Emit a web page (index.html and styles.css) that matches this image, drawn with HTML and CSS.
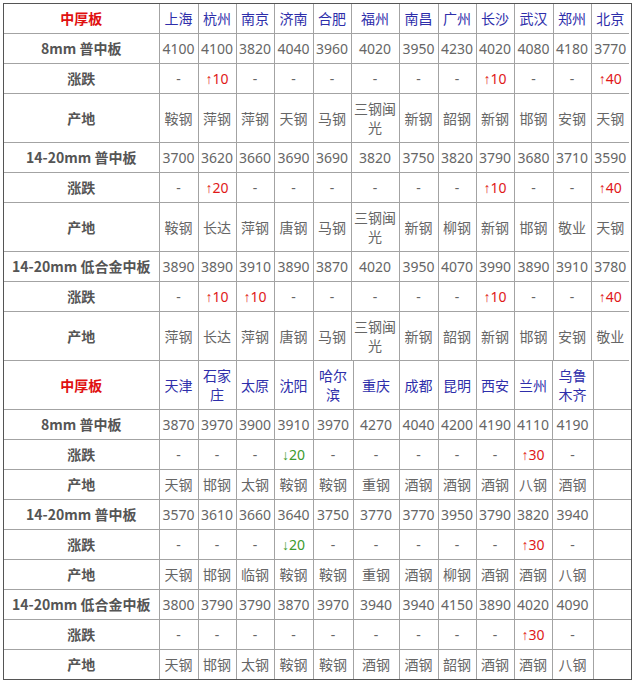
FILE: index.html
```html
<!DOCTYPE html>
<html lang="zh">
<head>
<meta charset="utf-8">
<title>中厚板价格</title>
<link rel="stylesheet" href="styles.css">
</head>
<body>
<div class="wrap">
<table class="grid t1">
<colgroup><col><col><col><col><col><col><col><col><col><col><col><col><col></colgroup>
<tr class="head"><td class="lbl red">中厚板</td><td>上海</td><td>杭州</td><td>南京</td><td>济南</td><td>合肥</td><td>福州</td><td>南昌</td><td>广州</td><td>长沙</td><td>武汉</td><td>郑州</td><td>北京</td></tr>
<tr class="num"><td class="lbl">8mm 普中板</td><td>4100</td><td>4100</td><td>3820</td><td>4040</td><td>3960</td><td>4020</td><td>3950</td><td>4230</td><td>4020</td><td>4080</td><td>4180</td><td>3770</td></tr>
<tr class="chg"><td class="lbl">涨跌</td><td>-</td><td class="up"><span class="ar">↑</span>10</td><td>-</td><td>-</td><td>-</td><td>-</td><td>-</td><td>-</td><td class="up"><span class="ar">↑</span>10</td><td>-</td><td>-</td><td class="up"><span class="ar">↑</span>40</td></tr>
<tr class="org"><td class="lbl">产地</td><td>鞍钢</td><td>萍钢</td><td>萍钢</td><td>天钢</td><td>马钢</td><td>三钢闽光</td><td>新钢</td><td>韶钢</td><td>新钢</td><td>邯钢</td><td>安钢</td><td>天钢</td></tr>
<tr class="num"><td class="lbl">14-20mm 普中板</td><td>3700</td><td>3620</td><td>3660</td><td>3690</td><td>3690</td><td>3820</td><td>3750</td><td>3820</td><td>3790</td><td>3680</td><td>3710</td><td>3590</td></tr>
<tr class="chg"><td class="lbl">涨跌</td><td>-</td><td class="up"><span class="ar">↑</span>20</td><td>-</td><td>-</td><td>-</td><td>-</td><td>-</td><td>-</td><td class="up"><span class="ar">↑</span>10</td><td>-</td><td>-</td><td class="up"><span class="ar">↑</span>40</td></tr>
<tr class="org"><td class="lbl">产地</td><td>鞍钢</td><td>长达</td><td>萍钢</td><td>唐钢</td><td>马钢</td><td>三钢闽光</td><td>新钢</td><td>柳钢</td><td>新钢</td><td>邯钢</td><td>敬业</td><td>天钢</td></tr>
<tr class="num"><td class="lbl">14-20mm 低合金中板</td><td>3890</td><td>3890</td><td>3910</td><td>3890</td><td>3870</td><td>4020</td><td>3950</td><td>4070</td><td>3990</td><td>3890</td><td>3910</td><td>3780</td></tr>
<tr class="chg"><td class="lbl">涨跌</td><td>-</td><td class="up"><span class="ar">↑</span>10</td><td class="up"><span class="ar">↑</span>10</td><td>-</td><td>-</td><td>-</td><td>-</td><td>-</td><td class="up"><span class="ar">↑</span>10</td><td>-</td><td>-</td><td class="up"><span class="ar">↑</span>40</td></tr>
<tr class="org"><td class="lbl">产地</td><td>萍钢</td><td>长达</td><td>萍钢</td><td>唐钢</td><td>马钢</td><td>三钢闽光</td><td>新钢</td><td>韶钢</td><td>新钢</td><td>邯钢</td><td>安钢</td><td>敬业</td></tr>
</table>
<table class="grid t2">
<colgroup><col><col><col><col><col><col><col><col><col><col><col><col><col></colgroup>
<tr class="head"><td class="lbl red">中厚板</td><td>天津</td><td>石家庄</td><td>太原</td><td>沈阳</td><td>哈尔滨</td><td>重庆</td><td>成都</td><td>昆明</td><td>西安</td><td>兰州</td><td>乌鲁木齐</td><td></td></tr>
<tr class="num"><td class="lbl">8mm 普中板</td><td>3870</td><td>3970</td><td>3900</td><td>3910</td><td>3970</td><td>4270</td><td>4040</td><td>4200</td><td>4190</td><td>4110</td><td>4190</td><td></td></tr>
<tr class="chg"><td class="lbl">涨跌</td><td>-</td><td>-</td><td>-</td><td class="down"><span class="ar">↓</span>20</td><td>-</td><td>-</td><td>-</td><td>-</td><td>-</td><td class="up"><span class="ar">↑</span>30</td><td>-</td><td></td></tr>
<tr class="org"><td class="lbl">产地</td><td>天钢</td><td>邯钢</td><td>太钢</td><td>鞍钢</td><td>鞍钢</td><td>重钢</td><td>酒钢</td><td>酒钢</td><td>酒钢</td><td>八钢</td><td>酒钢</td><td></td></tr>
<tr class="num"><td class="lbl">14-20mm 普中板</td><td>3570</td><td>3610</td><td>3660</td><td>3640</td><td>3750</td><td>3770</td><td>3770</td><td>3950</td><td>3790</td><td>3820</td><td>3940</td><td></td></tr>
<tr class="chg"><td class="lbl">涨跌</td><td>-</td><td>-</td><td>-</td><td class="down"><span class="ar">↓</span>20</td><td>-</td><td>-</td><td>-</td><td>-</td><td>-</td><td class="up"><span class="ar">↑</span>30</td><td>-</td><td></td></tr>
<tr class="org"><td class="lbl">产地</td><td>天钢</td><td>邯钢</td><td>临钢</td><td>鞍钢</td><td>鞍钢</td><td>重钢</td><td>酒钢</td><td>柳钢</td><td>酒钢</td><td>酒钢</td><td>八钢</td><td></td></tr>
<tr class="num"><td class="lbl">14-20mm 低合金中板</td><td>3800</td><td>3790</td><td>3790</td><td>3870</td><td>3970</td><td>3940</td><td>3940</td><td>4150</td><td>3890</td><td>4020</td><td>4090</td><td></td></tr>
<tr class="chg"><td class="lbl">涨跌</td><td>-</td><td>-</td><td>-</td><td>-</td><td>-</td><td>-</td><td>-</td><td>-</td><td>-</td><td class="up"><span class="ar">↑</span>30</td><td>-</td><td></td></tr>
<tr class="org"><td class="lbl">产地</td><td>天钢</td><td>邯钢</td><td>太钢</td><td>鞍钢</td><td>鞍钢</td><td>酒钢</td><td>酒钢</td><td>韶钢</td><td>酒钢</td><td>酒钢</td><td>八钢</td><td></td></tr>
</table>
</div>
</body>
</html>
```

FILE: styles.css
```css
html, body {
  margin: 0;
  padding: 0;
  background: #ffffff;
}
body {
  padding: 3px 0 0 3px;
  font-family: "Noto Sans CJK SC", "Noto Sans", sans-serif;
  font-size: 14px;
  color: #666666;
}
.wrap {
  display: inline-block;
  border: 1px solid #555555;
}
.grid {
  border-collapse: collapse;
  border: 1px hidden;
  table-layout: fixed;
}
.t1 {
  width: 625px;
  border-bottom: 1px solid #a3a3a3;
}
.t2 {
  width: 627px;
}
.grid td {
  border: 1px solid #a3a3a3;
  padding: 5px 2px 5px;
  line-height: 19px;
  text-align: center;
  vertical-align: middle;
  white-space: normal;
  word-break: break-all;
}
.t1 col:nth-child(1), .t2 col:nth-child(1) { width: 155px; }
.t1 col:nth-child(2) { width: 39px; }
.t1 col:nth-child(3) { width: 38px; }
.t1 col:nth-child(4) { width: 38px; }
.t1 col:nth-child(5) { width: 39px; }
.t1 col:nth-child(6) { width: 38px; }
.t1 col:nth-child(7) { width: 48px; }
.t1 col:nth-child(8) { width: 39px; }
.t1 col:nth-child(9) { width: 38px; }
.t1 col:nth-child(10) { width: 38px; }
.t1 col:nth-child(11) { width: 39px; }
.t1 col:nth-child(12) { width: 38px; }
.t1 col:nth-child(13) { width: 38px; }
.t2 col:nth-child(2) { width: 39px; }
.t2 col:nth-child(3) { width: 38px; }
.t2 col:nth-child(4) { width: 38px; }
.t2 col:nth-child(5) { width: 39px; }
.t2 col:nth-child(6) { width: 40px; }
.t2 col:nth-child(7) { width: 46px; }
.t2 col:nth-child(8) { width: 39px; }
.t2 col:nth-child(9) { width: 38px; }
.t2 col:nth-child(10) { width: 38px; }
.t2 col:nth-child(11) { width: 38px; }
.t2 col:nth-child(12) { width: 41px; }
.t2 col:nth-child(13) { width: 38px; }
.head td {
  color: #2e2eaa;
}
.grid td.lbl {
  color: #555555;
  font-weight: bold;
  white-space: nowrap;
  word-break: normal;
  font-family: "Noto Sans CJK SC", "Noto Sans", sans-serif;
}
.grid td.red {
  color: #e01010;
}
.num td, .chg td {
  white-space: nowrap;
  font-family: "Noto Sans", "Noto Sans CJK SC", sans-serif;
}
.grid td.up {
  color: #e01818;
}
.grid td.down {
  color: #3c9a2c;
}
.ar {
  font-family: "Liberation Sans", sans-serif;
  line-height: 14px;
}
```
